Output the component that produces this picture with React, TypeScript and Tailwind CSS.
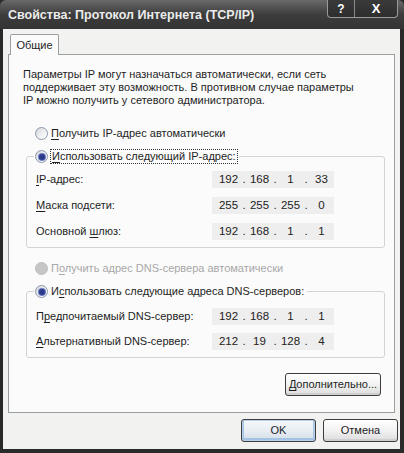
import React, { Fragment } from "react";

function U({ children }: { children: React.ReactNode }) {
  return <span className="underline underline-offset-[2px] decoration-1">{children}</span>;
}

function Radio({ checked = false, disabled = false }: { checked?: boolean; disabled?: boolean }) {
  if (disabled) {
    return <span className="block w-[13px] h-[13px] rounded-full bg-[#c6c6c6] border border-[#bdbdbd] shrink-0" />;
  }
  return (
    <span className="flex w-[13px] h-[13px] rounded-full border border-[#8a98ad] bg-gradient-to-br from-[#d4d6d8] via-[#eeeeee] to-white items-center justify-center shrink-0">
      {checked && <span className="block w-[6px] h-[6px] rounded-full bg-[#2a3a8c] ring-1 ring-[#6d7bc0]" />}
    </span>
  );
}

function IpField({ parts }: { parts: string[] }) {
  return (
    <div className="w-[122px] h-[17px] bg-[#eeeeee] flex items-center pl-[4px] text-[11.5px] leading-[17px] text-[#222]">
      {parts.map((p, i) => (
        <Fragment key={i}>
          <span className="w-[25px] text-center">{p}</span>
          {i < 3 && <span className="w-[6px] text-center">.</span>}
        </Fragment>
      ))}
    </div>
  );
}

function Row({ label, parts }: { label: React.ReactNode; parts: string[] }) {
  return (
    <div className="flex items-center h-[17px]">
      <div className="w-[176px] text-[#1e1e1e]">{label}</div>
      <IpField parts={parts} />
    </div>
  );
}

function XpButton({ children, def = false, w = 75 }: { children: React.ReactNode; def?: boolean; w?: number }) {
  return (
    <div
      className={
        "h-[23px] rounded-[3px] border border-[#3d3d3d] flex items-center justify-center text-[#1e1e1e] " +
        (def
          ? "bg-gradient-to-b from-[#f4f8fc] via-[#e8eef4] to-[#d4dde6] shadow-[inset_0_0_0_1px_#b8d0ea,inset_0_-1px_0_2px_#a4c2e4]"
          : "bg-gradient-to-b from-white via-[#f2f2f2] to-[#dcdcdc] shadow-[inset_0_-2px_0_0_#cfcfcf]")
      }
      style={{ width: w }}
    >
      {children}
    </div>
  );
}

export default function App() {
  return (
    <div className="w-[404px] h-[453px] bg-[#2a2a2a] flex flex-col font-['Liberation_Sans',Arial,sans-serif] text-[11px] overflow-hidden">
      {/* Title bar */}
      <div className="h-[29px] shrink-0 bg-gradient-to-b from-[#6a6a6a] via-[#3d3d3d] to-[#333333] flex items-start justify-between pl-[8px] pr-[6px] rounded-t-[6px]">
        <div className="mt-[7px] text-[12.5px] leading-[16px] font-bold text-[#ececec]">
          Свойства: Протокол Интернета (TCP/IP)
        </div>
        <div className="flex h-[18px] border border-t-0 border-[#9a9a9a] rounded-b-[4px] bg-gradient-to-b from-[#3a3a3a] to-[#2e2e2e] overflow-hidden">
          <div className="w-[27px] flex items-center justify-center text-white font-bold text-[12px] border-r border-[#8a8a8a]">?</div>
          <div className="w-[42px] flex items-center justify-center text-white font-bold text-[13px]">X</div>
        </div>
      </div>

      {/* Body */}
      <div className="flex-1 ml-[3px] mr-[4px] mb-[4px] bg-[#f2f2f0] flex flex-col pt-[5px]">
        {/* tab */}
        <div className="flex ml-[7px] relative z-10 -mb-px">
          <div className="w-[49px] h-[21px] bg-[#fbfbfb] border border-b-0 border-[#9a9fa0] rounded-t-[2px] text-[#1e1e1e] flex items-center justify-center">
            Общие
          </div>
        </div>
        {/* panel */}
        <div className="ml-[5px] w-[387px] h-[359px] bg-[#fbfbfb] border border-[#9a9fa0] flex flex-col text-[#1e1e1e]">
          <p className="mt-[13px] ml-[14px] leading-[13px]">
            Параметры IP могут назначаться автоматически, если сеть
            <br />
            поддерживает эту возможность. В противном случае параметры
            <br />
            IP можно получить у сетевого администратора.
          </p>

          <div className="mt-[20px] ml-[26px] h-[13px] flex items-center gap-[3px]">
            <Radio />
            <span className="leading-[13px]">
              <U>П</U>олучить IP-адрес автоматически
            </span>
          </div>

          <fieldset className="mt-[9px] ml-[17px] w-[359px] border border-[#d3d3cf] rounded-[3px] pb-[7px]">
            <legend className="ml-[7px] px-[1px] h-[15px] flex items-center gap-[2px]">
              <Radio checked />
              <span className="leading-[13px] border border-dotted border-[#333] px-[1px]">
                <U>И</U>спользовать следующий IP-адрес:
              </span>
            </legend>
            <div className="mt-[7px] pl-[9px] flex flex-col gap-[9px]">
              <Row label={<><U>I</U>P-адрес:</>} parts={["192", "168", "1", "33"]} />
              <Row label={<><U>М</U>аска подсети:</>} parts={["255", "255", "255", "0"]} />
              <Row label={<>Основной <U>ш</U>люз:</>} parts={["192", "168", "1", "1"]} />
            </div>
          </fieldset>

          <div className="mt-[14px] ml-[26px] h-[13px] flex items-center gap-[3px] text-[#a8a8a8]">
            <Radio disabled />
            <span className="leading-[13px]">
              П<U>о</U>лучить адрес DNS-сервера автоматически
            </span>
          </div>

          <fieldset className="mt-[9px] ml-[17px] w-[359px] border border-[#d3d3cf] rounded-[3px] pb-[7px]">
            <legend className="ml-[7px] px-[1px] h-[15px] flex items-center gap-[3px]">
              <Radio checked />
              <span className="leading-[13px] pr-[2px]">
                И<U>с</U>пользовать следующие адреса DNS-серверов:
              </span>
            </legend>
            <div className="mt-[9px] pl-[9px] flex flex-col gap-[8px]">
              <Row label={<>П<U>р</U>едпочитаемый DNS-сервер:</>} parts={["192", "168", "1", "1"]} />
              <Row label={<><U>А</U>льтернативный DNS-сервер:</>} parts={["212", "19", "128", "4"]} />
            </div>
          </fieldset>

          <div className="mt-[15px] self-end mr-[13px]">
            <XpButton w={96}>
              <U>Д</U>ополнительно...
            </XpButton>
          </div>
        </div>

        {/* bottom buttons */}
        <div className="mt-[6px] flex justify-end gap-[7px] pr-[2px]">
          <XpButton def>OK</XpButton>
          <XpButton>Отмена</XpButton>
        </div>
      </div>
    </div>
  );
}
